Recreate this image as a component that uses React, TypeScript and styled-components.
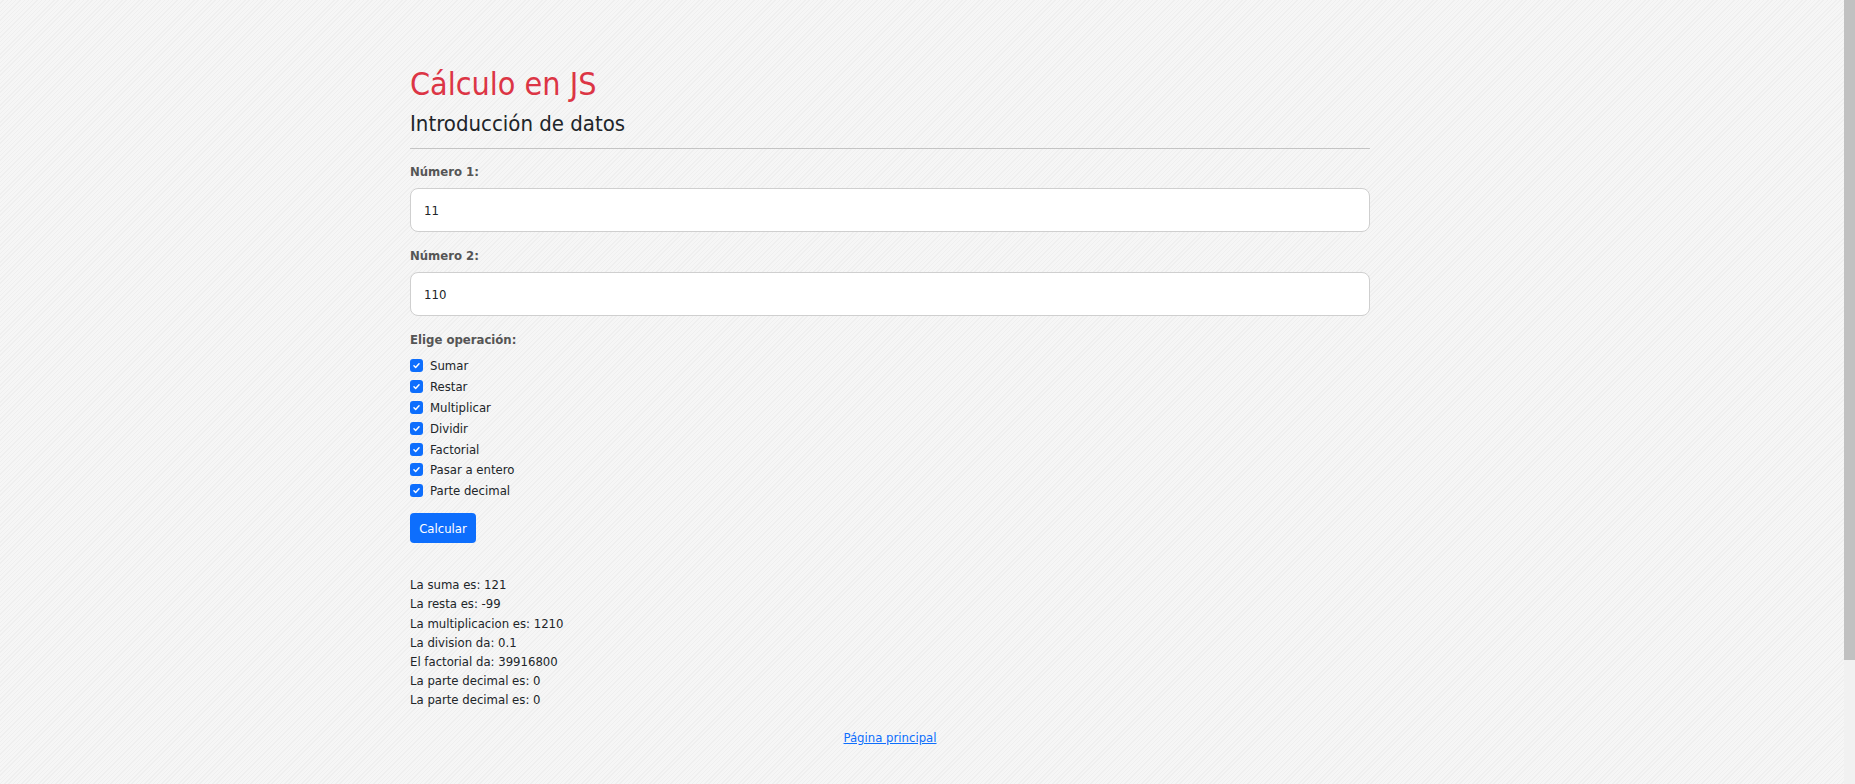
import React from 'react'
import styled, { createGlobalStyle } from 'styled-components'

const fontStack = `"DejaVu Sans Condensed", "DejaVu Sans", "Liberation Sans", sans-serif`

const GlobalStyle = createGlobalStyle`
  html, body {
    margin: 0;
    padding: 0;
    height: 100%;
    overflow: hidden;
  }
  body {
    font-family: ${fontStack};
    color: #212529;
  }
`

const operations = [
  'Sumar',
  'Restar',
  'Multiplicar',
  'Dividir',
  'Factorial',
  'Pasar a entero',
  'Parte decimal'
]

const results = [
  'La suma es: 121',
  'La resta es: -99',
  'La multiplicacion es: 1210',
  'La division da: 0.1',
  'El factorial da: 39916800',
  'La parte decimal es: 0',
  'La parte decimal es: 0'
]

export default function App() {
  return (
    <Page>
      <GlobalStyle />
      <Main>
        <Container>
          <Title>Cálculo en JS</Title>
          <Subtitle>Introducción de datos</Subtitle>
          <Divider />
          <Field>
            <Label>Número 1:</Label>
            <Input type="text" defaultValue="11" />
          </Field>
          <Field>
            <Label>Número 2:</Label>
            <Input type="text" defaultValue="110" />
          </Field>
          <Label>Elige operación:</Label>
          <CheckList>
            {operations.map((op) => (
              <CheckRow key={op}>
                <CheckBox>
                  <svg width="9" height="9" viewBox="0 0 16 16">
                    <path
                      d="M3.5 8.5l3 3 6-6.5"
                      fill="none"
                      stroke="#fff"
                      strokeWidth="2.6"
                      strokeLinecap="round"
                      strokeLinejoin="round"
                    />
                  </svg>
                </CheckBox>
                {op}
              </CheckRow>
            ))}
          </CheckList>
          <Button type="button">Calcular</Button>
          <Results>
            {results.map((r, i) => (
              <ResultLine key={i}>{r}</ResultLine>
            ))}
          </Results>
          <Footer>
            <FooterLink href="#">Página principal</FooterLink>
          </Footer>
        </Container>
      </Main>
      <ScrollTrack>
        <ScrollThumb />
      </ScrollTrack>
    </Page>
  )
}

const Page = styled.div`
  display: flex;
  height: 100vh;
  width: 100vw;
  overflow: hidden;
`

const Main = styled.main`
  flex: 1;
  min-width: 0;
  background-color: #f5f5f5;
  background-image: repeating-linear-gradient(
    135deg,
    #f6f6f6 0px,
    #f6f6f6 2px,
    #efefef 2px,
    #efefef 3px
  );
  padding-top: 65px;
`

const Container = styled.div`
  width: 960px;
  margin-left: 410px;
  display: flex;
  flex-direction: column;
  align-items: flex-start;
`

const Title = styled.h1`
  margin: 0;
  font-size: 32px;
  line-height: 38px;
  font-weight: 400;
  color: #dc3545;
`

const Subtitle = styled.h4`
  margin: 7px 0 0;
  font-size: 22px;
  line-height: 28px;
  font-weight: 400;
  color: #212529;
`

const Divider = styled.hr`
  align-self: stretch;
  margin: 10px 0 15px;
  border: 0;
  border-top: 1px solid #c4c4c4;
`

const Field = styled.div`
  align-self: stretch;
  display: flex;
  flex-direction: column;
  margin-bottom: 16px;
`

const Label = styled.label`
  font-size: 13px;
  line-height: 16px;
  font-weight: 700;
  color: #555;
`

const Input = styled.input`
  margin-top: 8px;
  box-sizing: border-box;
  width: 100%;
  height: 44px;
  padding: 0 13px;
  font-family: ${fontStack};
  font-size: 13px;
  color: #212529;
  background: #fff;
  border: 1px solid #cfcfcf;
  border-radius: 8px;
  outline: none;
`

const CheckList = styled.div`
  margin-top: 7px;
  display: flex;
  flex-direction: column;
`

const CheckRow = styled.div`
  display: flex;
  align-items: center;
  gap: 7px;
  height: 20.9px;
  font-size: 13px;
  color: #212529;
`

const CheckBox = styled.span`
  width: 13px;
  height: 13px;
  border-radius: 3px;
  background: #0d6efd;
  display: flex;
  align-items: center;
  justify-content: center;
`

const Button = styled.button`
  margin-top: 12px;
  height: 30px;
  width: 66px;
  padding: 0;
  font-family: ${fontStack};
  font-size: 13px;
  color: #fff;
  background: #0d6efd;
  border: 0;
  border-radius: 4px;
`

const Results = styled.div`
  margin-top: 32px;
  display: flex;
  flex-direction: column;
`

const ResultLine = styled.div`
  font-size: 13px;
  line-height: 19.2px;
  color: #212529;
`

const Footer = styled.div`
  align-self: stretch;
  margin-top: 18px;
  text-align: center;
  font-size: 13px;
  line-height: 19px;
`

const FooterLink = styled.a`
  color: #0d6efd;
  text-decoration: underline;
`

const ScrollTrack = styled.div`
  width: 11px;
  background: #f1f1f1;
  display: flex;
  flex-direction: column;
`

const ScrollThumb = styled.div`
  height: 660px;
  background: #c1c1c1;
`
